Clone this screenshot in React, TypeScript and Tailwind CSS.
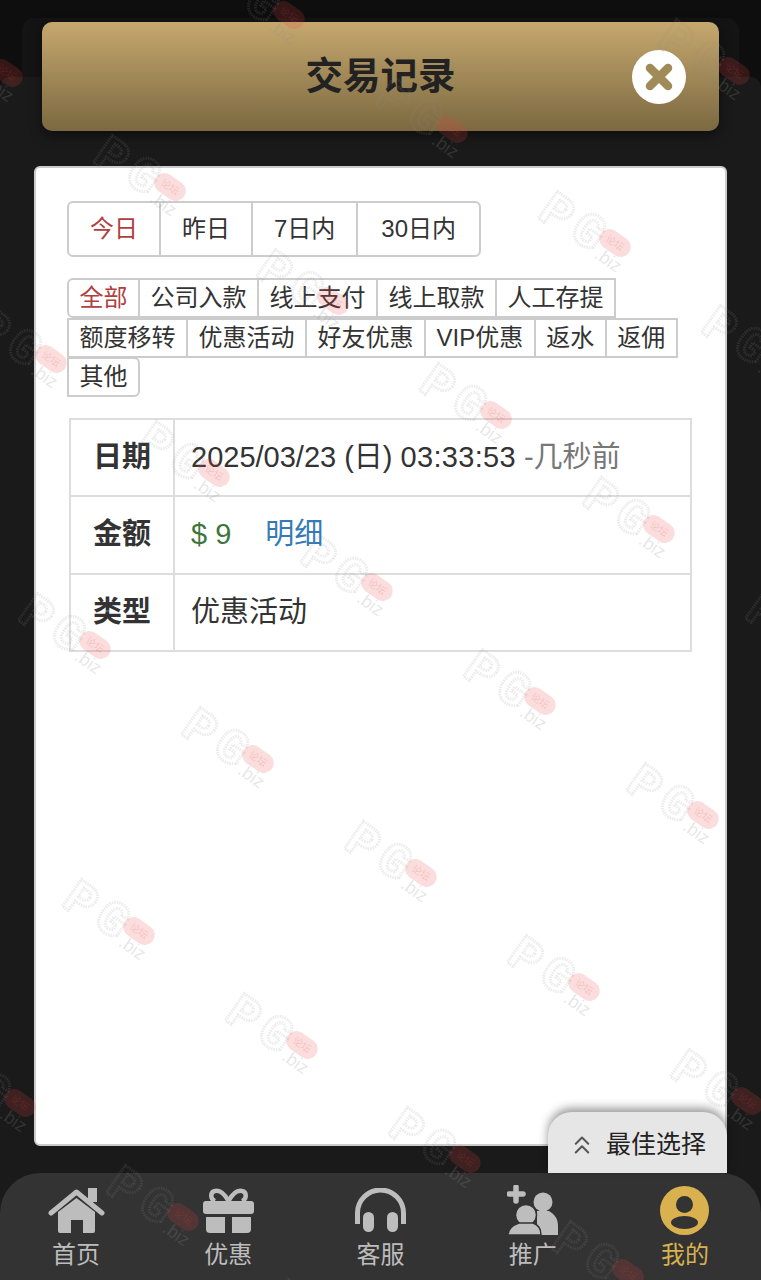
import React from 'react';
import { ChevronsUp } from 'lucide-react';

const ranges = ['今日', '昨日', '7日内', '30日内'];
const types = ['全部', '公司入款', '线上支付', '线上取款', '人工存提', '额度移转', '优惠活动', '好友优惠', 'VIP优惠', '返水', '返佣', '其他'];

// watermark lattice, measured from the pill centres
const marks: { x: number; y: number }[] = [];
for (let i = -6; i < 10; i++) {
  for (let j = -3; j < 9; j++) {
    const x = 170 + i * 163 - j * 119;
    const y = 187 + i * 114 + j * 172;
    if (x > -60 && x < 840 && y > -60 && y < 1340) marks.push({ x, y });
  }
}

function Watermark({ x, y }: { x: number; y: number }) {
  return (
    <svg className="absolute" width="130" height="110" viewBox="-85 -65 130 110" style={{ left: x - 85, top: y - 65 }}>
      <g fontFamily="Liberation Mono, monospace" fontWeight="700" textAnchor="middle">
        <text transform="translate(-67 -18) rotate(35)" fontSize="50" fill="none" stroke="#909090" strokeOpacity="0.17" strokeWidth="3" strokeDasharray="1.5 1">P</text>
        <text transform="translate(-35 1) rotate(35)" fontSize="50" fill="none" stroke="#909090" strokeOpacity="0.17" strokeWidth="3" strokeDasharray="1.5 1">G</text>
      </g>
      <text transform="translate(-10 22) rotate(35)" fontFamily="Liberation Sans, sans-serif" fontSize="18" textAnchor="middle" fill="#909090" fillOpacity="0.22">.biz</text>
      <g transform="rotate(35)">
        <rect x="-17" y="-10" width="34" height="20" rx="10" fill="#e84040" fillOpacity="0.18" />
        <text y="3.5" fontFamily="Noto Sans CJK SC, sans-serif" fontSize="10" textAnchor="middle" fill="#e84040" fillOpacity="0.2">论坛</text>
      </g>
    </svg>
  );
}

function HomeIcon() {
  return (
    <svg width="57" height="45" viewBox="0 0 57 45" fill="#bdbdbd">
      <rect x="40" y="0" width="9" height="14" />
      <path d="M10 24 28.5 10 47 24V43a2 2 0 0 1-2 2H35V32H23V45H12a2 2 0 0 1-2-2Z" />
      <path d="M3 25 28.5 4 54 25" fill="none" stroke="#bdbdbd" strokeWidth="5" strokeLinecap="round" strokeLinejoin="round" />
    </svg>
  );
}

function GiftIcon() {
  return (
    <svg width="51" height="45" viewBox="0 0 51 45" fill="#bdbdbd">
      <path d="M25.5 13C21 5 16 2 12 3 7 4 7 11 12 13M25.5 13C30 5 35 2 39 3 44 4 44 11 39 13" fill="none" stroke="#bdbdbd" strokeWidth="4.5" />
      <rect x="0" y="13" width="51" height="13" rx="3" />
      <path d="M3 29H22V45H7a4 4 0 0 1-4-4Z" />
      <path d="M29 29H48V41a4 4 0 0 1-4 4H29Z" />
    </svg>
  );
}

function HeadsetIcon() {
  return (
    <svg width="51" height="44" viewBox="0 0 51 44" fill="#bdbdbd">
      <path d="M2.5 36V25a23 23 0 0 1 46 0V36" fill="none" stroke="#bdbdbd" strokeWidth="5" />
      <rect x="8" y="24" width="11" height="20" rx="5.5" />
      <rect x="32" y="24" width="11" height="20" rx="5.5" />
    </svg>
  );
}

function InviteIcon() {
  return (
    <svg width="51" height="50" viewBox="0 0 51 50" fill="#bdbdbd">
      <path d="M9 2V16M2 9H16" fill="none" stroke="#bdbdbd" strokeWidth="5.5" strokeLinecap="round" />
      <circle cx="36" cy="17" r="9.5" />
      <path d="M30 26H42C47 29 51 33 51 41V50H30Z" />
      <circle cx="19" cy="30" r="10.5" stroke="#333333" strokeWidth="1.5" />
      <path d="M1 50C1 44 6 40 12 38H26C32 40 34 44 34 50Z" stroke="#333333" strokeWidth="1.5" />
    </svg>
  );
}

function ProfileIcon() {
  return (
    <svg width="49" height="49" viewBox="0 0 49 49">
      <circle cx="24.5" cy="24.5" r="24.5" fill="#d9b24f" />
      <circle cx="24.5" cy="18.5" r="8.5" fill="#333333" />
      <ellipse cx="24.5" cy="36.5" rx="13.5" ry="6.5" fill="#333333" />
    </svg>
  );
}

const navItems = [
  { label: '首页', icon: <HomeIcon /> },
  { label: '优惠', icon: <GiftIcon /> },
  { label: '客服', icon: <HeadsetIcon /> },
  { label: '推广', icon: <InviteIcon /> },
  { label: '我的', icon: <ProfileIcon />, active: true },
];

export default function App() {
  return (
    <div className="relative h-[1280px] w-[761px] overflow-hidden bg-[#0e0e0e] font-['Liberation_Sans','Noto_Sans_CJK_SC',sans-serif] text-[#333]">
      {/* page behind the modal */}
      <div className="mx-[22px] mt-[18px] h-[59px] rounded-t-[12px] bg-[#141414]" />
      <div className="h-[1203px] rounded-t-[10px] bg-[#1a1a1a]" />

      {/* modal */}
      <div className="absolute inset-0 flex flex-col pt-[22px]">
        <div className="relative mx-[42px] flex h-[109px] items-center justify-center rounded-[10px] bg-gradient-to-b from-[#c6a86e] to-[#7c6941] shadow-[0_4px_12px_rgba(0,0,0,0.5)]">
          <h1 className="text-[37.5px] font-bold text-[#222]">交易记录</h1>
          <div className="absolute right-[33px] top-[28px] flex h-[54px] w-[54px] items-center justify-center rounded-full bg-white">
            <svg width="30" height="30" viewBox="0 0 30 30">
              <path d="M6 6 24 24M24 6 6 24" stroke="#a08a58" strokeWidth="8.5" strokeLinecap="round" />
            </svg>
          </div>
        </div>

        <div className="mx-[34px] mt-[35px] h-[980px] rounded-[6px] border-2 border-[#ccc] bg-white pl-[31px] pt-[33px]">
          <div className="flex h-[56px]">
            {ranges.map((r, i) => (
              <div
                key={r}
                className={`-ml-[2px] flex items-center border-2 border-[#ccc] px-[21px] text-[24px] first:ml-0 first:rounded-l-[6px] last:rounded-r-[6px] last:px-[23px] ${i === 0 ? 'text-[#b04040]' : 'text-[#333]'}`}
              >
                {r}
              </div>
            ))}
          </div>

          <div className="mt-[21px] flex w-[626px] flex-wrap">
            {types.map((t, i) => (
              <div
                key={t}
                className={`-mr-[2px] -mb-[0.5px] flex h-[40px] items-center border-2 border-[#ccc] px-[10.5px] text-[24px] ${i === 0 ? 'rounded-tl-[6px] rounded-bl-[6px] text-[#b04040]' : ''} ${i === 11 ? 'rounded-r-[6px]' : ''}`}
              >
                {t}
              </div>
            ))}
          </div>

          <table className="ml-[2px] mt-[21px] w-[623px] border-collapse text-[29px]">
            <tbody>
              <tr className="h-[77.5px]">
                <th className="w-[104px] border-2 border-[#ddd] text-center font-bold">日期</th>
                <td className="border-2 border-[#ddd] pl-[16px]">
                  2025/03/23 (日) <span className="tracking-[0.3px]">03:33:53</span> <span className="text-[#777]">-几秒前</span>
                </td>
              </tr>
              <tr className="h-[77.5px]">
                <th className="border-2 border-[#ddd] text-center font-bold">金额</th>
                <td className="border-2 border-[#ddd] pl-[16px]">
                  <span className="text-[#3c763d]">$ 9</span>
                  <span className="ml-[34px] text-[#337ab7]">明细</span>
                </td>
              </tr>
              <tr className="h-[77.5px]">
                <th className="border-2 border-[#ddd] text-center font-bold">类型</th>
                <td className="border-2 border-[#ddd] pl-[16px]">优惠活动</td>
              </tr>
            </tbody>
          </table>
        </div>

        <nav className="mt-[27px] grid h-[107px] grid-cols-5 rounded-t-[40px] bg-[#333]">
          {navItems.map((item) => (
            <div key={item.label} className="flex flex-col items-center">
              <div className="mt-[11px] flex h-[52px] items-center">{item.icon}</div>
              <span className={`mt-[3px] text-[24px] leading-[32px] ${item.active ? 'text-[#d9b24f]' : 'text-[#bdbdbd]'}`}>{item.label}</span>
            </div>
          ))}
        </nav>
      </div>

      {/* floating shortcut */}
      <div className="absolute right-[34px] top-[1112px] flex h-[61px] w-[179px] items-center rounded-t-[24px] bg-[#e6e6e6] pl-[19px] pt-[4px] shadow-[0_-4px_10px_rgba(0,0,0,0.4)]">
        <ChevronsUp className="h-[30px] w-[30px] text-[#555]" strokeWidth={1.6} />
        <span className="ml-[9px] text-[25px] text-[#222]">最佳选择</span>
      </div>

      {/* PG.biz watermark over everything */}
      <div className="pointer-events-none absolute inset-0">
        {marks.map((m) => (
          <Watermark key={`${m.x}-${m.y}`} x={m.x} y={m.y} />
        ))}
      </div>
    </div>
  );
}
